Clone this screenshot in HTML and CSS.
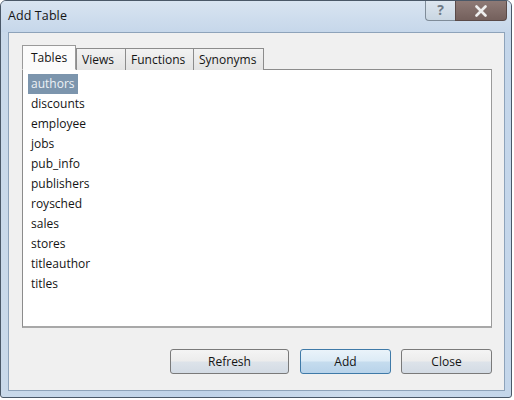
FILE: index.html
```html
<!DOCTYPE html>
<html>
<head>
<meta charset="utf-8">
<link rel="stylesheet" href="styles.css">
</head>
<body>
<div class="window">
  <div class="titlebar">
    <span class="title">Add Table</span>
    <div class="caption">
      <div class="cap-help">?</div>
      <div class="cap-close">
        <svg width="14" height="12" viewBox="0 0 14 12"><path d="M2.5 1.5 L11.5 10.5 M11.5 1.5 L2.5 10.5" stroke="#eeeeee" stroke-width="2.6" stroke-linecap="round"/></svg>
      </div>
    </div>
  </div>
  <div class="client">
    <div class="tabs">
      <div class="tab active t-tables">Tables</div>
      <div class="tab t-views">Views</div>
      <div class="tab t-functions">Functions</div>
      <div class="tab t-synonyms">Synonyms</div>
    </div>
    <div class="panel">
      <div class="item"><span class="sel">authors</span></div>
      <div class="item">discounts</div>
      <div class="item">employee</div>
      <div class="item">jobs</div>
      <div class="item">pub_info</div>
      <div class="item">publishers</div>
      <div class="item">roysched</div>
      <div class="item">sales</div>
      <div class="item">stores</div>
      <div class="item">titleauthor</div>
      <div class="item">titles</div>
    </div>
    <div class="buttons">
      <button class="btn wide">Refresh</button>
      <button class="btn default">Add</button>
      <button class="btn">Close</button>
    </div>
  </div>
</div>
</body>
</html>
```

FILE: styles.css
```css
html, body {
  margin: 0;
  padding: 0;
  background: #ffffff;
}
body {
  font-family: "Open Sans", "Noto Sans", sans-serif;
  font-size: 12px;
  color: #141414;
}
.window {
  width: 510px;
  height: 396px;
  border: 1px solid #4a5868;
  border-radius: 6px 6px 3px 3px;
  background: linear-gradient(90deg, #c9d9ea 0%, #bfd2e8 40%, #cddcec 70%, #c4d6ea 100%);
  display: flex;
  flex-direction: column;
  overflow: hidden;
}
.titlebar {
  flex: 0 0 31px;
  display: flex;
  align-items: flex-start;
  background: linear-gradient(180deg, #d8e4f1 0%, #c6d7ea 100%);
}
.title {
  margin: 6px 0 0 7px;
  font-size: 12.5px;
  color: #141414;
  letter-spacing: 0.1px;
}
.caption {
  margin-left: auto;
  margin-right: 4px;
  display: flex;
  height: 20px;
}
.cap-help {
  width: 29px;
  height: 19px;
  border: 1px solid #7f8c99;
  border-top: none;
  border-right: none;
  border-radius: 0 0 0 4px;
  background: linear-gradient(180deg, #dde6ef 0%, #c9d6e2 100%);
  color: #6f7a86;
  font-weight: 700;
  font-size: 14px;
  line-height: 18px;
  text-align: center;
}
.cap-close {
  width: 50px;
  height: 19px;
  border: 1px solid #5a4a48;
  border-top: none;
  border-radius: 0 0 4px 0;
  background: linear-gradient(180deg, #8e7a76 0%, #74605c 100%);
  display: flex;
  align-items: center;
  justify-content: center;
}
.client {
  flex: 1 1 auto;
  margin: 0 6px 6px 7px;
  background: #f0f0f0;
  border: 1px solid #8ea3ba;
  display: flex;
  flex-direction: column;
  padding: 12px 12px 0 13px;
}
.tabs {
  flex: 0 0 25px;
  display: flex;
  align-items: flex-end;
  margin-bottom: -1px;
  position: relative;
  z-index: 1;
}
.tab {
  padding: 0 0 0 5px;
  border: 1px solid #8c8c8c;
  border-bottom: none;
  margin-left: -1px;
  background: linear-gradient(180deg, #f2f2f2 0%, #e3e3e3 100%);
  color: #141414;
  box-sizing: border-box;
  height: 22px;
  line-height: 21px;
}
.tab.active {
  height: 25px;
  line-height: 24px;
  padding-left: 8px;
  margin-left: 0;
  background: #fbfbfb;
  border-color: #9a9a9a;
  border-bottom: 1px solid #fbfbfb;
}
.tab.active + .tab {
  margin-left: 0;
}
.t-tables { width: 54px; }
.t-views { width: 50px; }
.t-functions { width: 69px; }
.t-synonyms { width: 71px; }
.panel {
  flex: 0 0 auto;
  height: 248px;
  border: 1px solid #8c8c8c;
  border-right-color: #9a9a9a;
  border-bottom: 2px solid #a8a8a8;
  background: #ffffff;
  padding: 4px 4px;
}
.item {
  height: 20px;
  line-height: 20px;
  padding-left: 4px;
}
.sel {
  display: inline-block;
  margin-left: -3px;
  padding: 0 3px;
  height: 20px;
  background: #7c95ad;
  color: #eef2f6;
}
.buttons {
  flex: 0 0 auto;
  display: flex;
  justify-content: flex-end;
  gap: 10px;
  margin-top: 21px;
}
.btn {
  width: 91px;
  height: 25px;
  font-family: "Open Sans", "Noto Sans", sans-serif;
  font-size: 12px;
  color: #141414;
  border: 1px solid #7a7a7a;
  border-radius: 3px;
  background: linear-gradient(180deg, #f4f4f4 0%, #ececec 48%, #dde3ea 52%, #d3dbe4 100%);
  padding: 0;
}
.btn.wide {
  width: 119px;
  margin-right: 1px;
}
.btn.default {
  border-color: #3f7aa8;
  background: linear-gradient(180deg, #eaf3fa 0%, #dcebf6 48%, #c5dcee 52%, #b8d3ea 100%);
}
```
